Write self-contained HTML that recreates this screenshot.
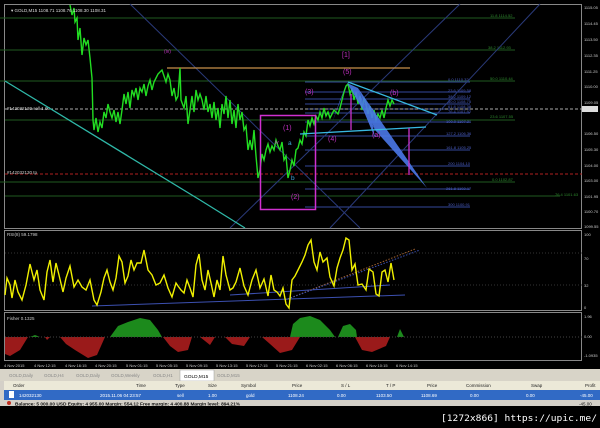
<!DOCTYPE html>
<html><head><meta charset="utf-8"><style>
body{margin:0;width:600px;height:428px;background:#000;overflow:hidden;font-family:"Liberation Sans",sans-serif;position:relative}
</style></head><body>
<svg width="600" height="428" style="position:absolute;left:0;top:0" font-family="Liberation Sans, sans-serif">
<rect x="0" y="0" width="600" height="406" fill="#000"/>
<rect x="4.5" y="4.5" width="577" height="224" fill="none" stroke="#888" stroke-width="1"/>
<rect x="4.5" y="230.5" width="577" height="80" fill="none" stroke="#888"/>
<rect x="4.5" y="312.5" width="577" height="48" fill="none" stroke="#888"/>
<g stroke="#1f5a1f" stroke-width="1">
<line x1="0" y1="18" x2="515" y2="18"/><line x1="0" y1="50" x2="515" y2="50"/>
<line x1="0" y1="81" x2="515" y2="81"/><line x1="5" y1="120" x2="515" y2="120"/>
<line x1="0" y1="182" x2="515" y2="182"/><line x1="5" y1="196" x2="560" y2="196"/>
</g>
<g stroke="#34489a" stroke-width="1">
<line x1="305" y1="92" x2="470" y2="92"/><line x1="305" y1="99" x2="470" y2="99"/>
<line x1="305" y1="104" x2="470" y2="104"/><line x1="305" y1="109" x2="470" y2="109"/>
<line x1="305" y1="113" x2="470" y2="113"/><line x1="305" y1="122" x2="470" y2="122"/>
<line x1="305" y1="136" x2="470" y2="136"/><line x1="305" y1="150" x2="470" y2="150"/>
<line x1="305" y1="166" x2="470" y2="166"/><line x1="305" y1="189" x2="470" y2="189"/>
<line x1="305" y1="207" x2="470" y2="207"/><line x1="305" y1="82" x2="470" y2="82"/>
</g>
<g font-size="4" fill="#4a5cc0">
<text x="448" y="81">0.0 1110.32</text><text x="448" y="92">23.6 1109.58</text>
<text x="448" y="98">38.2 1109.12</text><text x="448" y="103">50.0 1108.75</text>
<text x="448" y="108">61.8 1108.38</text><text x="448" y="113">76.4 1107.92</text>
<text x="446" y="123">100.0 1107.21</text><text x="446" y="135">127.2 1106.36</text>
<text x="446" y="149">161.8 1105.25</text><text x="448" y="165">200 1104.10</text>
<text x="446" y="190">261.8 1102.17</text><text x="448" y="206">300 1100.91</text>
</g>
<g font-size="4" fill="#2e8a2e">
<text x="490" y="17">11.8 1114.52</text><text x="488" y="49">38.2 1112.93</text>
<text x="490" y="80">50.0 1110.44</text><text x="490" y="118">23.6 1107.55</text>
<text x="492" y="181">0.0 1102.87</text><text x="555" y="196">76.4 1101.63</text>
</g>
<line x1="5" y1="109" x2="582" y2="109" stroke="#aaa" stroke-dasharray="3,2"/>
<line x1="5" y1="174" x2="582" y2="174" stroke="#b02020" stroke-dasharray="3,2"/>
<text x="7" y="110" font-size="4.5" fill="#ccc">#142032130 sell 1.00</text>
<text x="7" y="174" font-size="4.5" fill="#ccc">#142032130 tp</text>
<g stroke="#2a3a7a" stroke-width="1">
<line x1="230" y1="228" x2="460" y2="4"/><line x1="330" y1="228" x2="540" y2="4"/>
<line x1="130" y1="4" x2="360" y2="228"/>
</g>
<line x1="5" y1="81" x2="200" y2="200" stroke="#2fb8a8" stroke-width="1.3"/>
<line x1="200" y1="200" x2="245" y2="228" stroke="#2fb8a8" stroke-width="1.3"/>
<line x1="167" y1="68" x2="410" y2="68" stroke="#c8914a" stroke-width="1.3"/>
<polyline fill="none" stroke="#22dd22" stroke-width="1.4" points="70,5 72,15 74,8 75,22 77,18 78,40 80,28 82,55 84,38 86,45 88,40 90,58 92,78 93,120 94,130 96,118 98,132 100,122 102,128 104,112 106,118 108,104 110,112 112,118 114,110 116,122 118,112 120,124 122,110 124,94 126,104 128,92 130,108 132,90 134,96 136,88 138,100 140,88 142,92 144,84 146,96 148,86 150,80 152,90 154,82 156,78 158,74 160,72 162,70 164,76 166,82 168,74 170,80 172,96 174,88 176,100 178,96 180,68 181,100 184,108 186,96 188,124 190,110 192,96 194,112 196,90 198,100 200,94 202,100 204,110 206,96 208,112 210,104 212,118 214,102 216,120 218,108 220,128 222,104 224,114 226,96 228,118 230,100 232,124 234,110 236,128 238,104 240,120 242,112 244,130 246,126 248,150 250,140 252,150 254,130 256,156 258,178 260,170 262,154 264,160 266,150 268,144 270,152 272,146 274,150 276,140 278,146 280,150 282,142 284,160 286,156 288,178 290,170 292,160 294,166 296,150 298,148 300,140 302,144 304,132 306,136 308,120 310,126 312,118 314,124 316,116 318,120 320,112 322,118 324,108 326,116 328,112 330,118 332,114 334,110 336,112 338,114 340,108 342,100 344,92 346,86 348,84 350,94 352,88 354,100 356,92 358,104 360,96 362,110 364,98 366,104 368,114 370,106 372,118 374,110 376,120 378,114 380,118 382,110 384,118 386,108 388,100 390,106 392,100 394,104"/>
<g fill="#4a78e8" opacity="0.9">
<polygon points="332,123 347,83 340,100"/>
<polygon points="347,83 358,88 375,130"/>
<polygon points="358,88 375,130 427,188"/>
<polygon points="357,95 375,138 370,110"/>
</g>
<line x1="348" y1="82" x2="437" y2="115" stroke="#38b8e0" stroke-width="1.3"/>
<line x1="300" y1="134" x2="426" y2="127" stroke="#38b8e0" stroke-width="1.3"/>
<line x1="351" y1="94" x2="351" y2="130" stroke="#cc33cc" stroke-width="1.3"/>
<line x1="409" y1="128" x2="409" y2="175" stroke="#cc33cc" stroke-width="1.3"/>
<rect x="260.5" y="115.5" width="55" height="94" fill="none" stroke="#d030d0" stroke-width="1.5"/>
<g font-size="7" fill="#c030c0">
<text x="342" y="57">[1]</text><text x="343" y="74">(5)</text><text x="305" y="94">(3)</text>
<text x="390" y="95">(b)</text><text x="283" y="130">(1)</text><text x="328" y="141">(4)</text>
<text x="372" y="137">(a)</text><text x="291" y="199">(2)</text><text x="164" y="53" font-size="5">(iv)</text>
<text x="275" y="144" font-size="5">iv</text>
</g>
<text x="288" y="145" font-size="6.5" fill="#40a8e0">a</text>
<text x="291" y="180" font-size="6.5" fill="#40a8e0">b</text>
<text x="11" y="12" font-size="4.5" fill="#ddd">▾ GOLD,M15  1108.71 1108.76 1108.30 1108.31</text>
<g font-size="4" fill="#ccc">
<text x="584" y="9">1115.05</text><text x="584" y="25">1114.45</text><text x="584" y="41">1113.50</text>
<text x="584" y="57">1112.35</text><text x="584" y="73">1111.25</text><text x="584" y="88">1110.00</text>
<text x="584" y="104">1109.05</text><text x="584" y="135">1106.50</text><text x="584" y="151">1105.30</text>
<text x="584" y="167">1104.00</text><text x="584" y="182">1103.00</text><text x="584" y="198">1101.95</text>
<text x="584" y="213">1100.70</text><text x="584" y="228">1099.55</text>
<text x="584" y="236">100</text><text x="584" y="260">70</text><text x="584" y="287">32</text><text x="584" y="309">0</text>
<text x="584" y="318">1.96</text><text x="584" y="338">0.00</text><text x="584" y="357">-1.0935</text>
</g>
<rect x="582" y="106" width="16" height="6" fill="#ddd"/>
<text x="7" y="236" font-size="4.5" fill="#ccc">RSI(8) 59.1798</text>
<line x1="5" y1="285" x2="582" y2="285" stroke="#333" stroke-dasharray="1,2"/>
<line x1="5" y1="253" x2="582" y2="253" stroke="#333" stroke-dasharray="1,2"/>
<line x1="92" y1="306" x2="405" y2="295" stroke="#3c50b0"/>
<line x1="230" y1="295" x2="390" y2="285" stroke="#3c50b0"/>
<line x1="285" y1="300" x2="415" y2="249" stroke="#a06030" stroke-dasharray="1.5,1.5"/>
<line x1="285" y1="300" x2="420" y2="250" stroke="#3c50b0" stroke-dasharray="1.5,1.5"/>
<polyline fill="none" stroke="#f0f000" stroke-width="1.4" points="5,295 7,278 10,285 12,298 15,280 18,292 22,300 26,285 30,264 34,280 37,270 40,290 44,300 47,272 50,260 53,282 56,263 59,275 63,292 66,278 70,266 74,287 78,280 82,287 86,290 90,280 94,300 97,305 101,292 104,278 107,270 110,282 113,290 116,278 119,256 122,262 125,283 128,276 131,260 134,270 137,263 141,263 144,250 148,270 152,275 156,285 160,283 164,275 168,288 172,297 176,283 178,286 181,290 184,293 187,280 190,288 193,297 196,265 199,254 202,280 205,290 208,270 211,283 214,297 217,280 220,290 223,256 226,275 230,290 233,288 236,282 240,268 244,286 248,295 252,280 256,270 260,288 264,279 268,296 271,275 274,290 277,292 280,296 283,288 286,304 289,308 292,280 295,276 298,270 302,262 305,255 308,245 311,240 314,262 317,270 320,252 323,262 327,258 330,277 334,286 337,268 340,258 343,250 346,238 349,240 352,270 355,264 358,285 362,284 366,290 369,269 373,272 376,294 379,296 382,272 385,270 388,282 391,263 394,280"/>
<text x="7" y="320" font-size="4.5" fill="#ccc">Fisher 0.1325</text>
<g fill="#9a1a1a">
<polygon points="5,337 28,337 20,350 10,356 5,354"/>
<polygon points="45,337 50,337 47,340"/>
<polygon points="60,337 105,337 97,355 88,358 75,350 66,344"/>
<polygon points="163,337 192,337 188,350 178,352 170,346"/>
<polygon points="200,337 215,337 210,345"/>
<polygon points="225,337 250,337 244,346 232,344"/>
<polygon points="262,337 300,337 292,350 280,353 270,344"/>
<polygon points="355,337 390,337 386,346 372,352 362,350"/>
</g>
<g fill="#1c8a1c">
<polygon points="110,337 118,326 128,322 140,318 150,320 158,330 162,337"/>
<polygon points="290,337 293,324 300,318 310,316 320,320 330,330 335,337"/>
<polygon points="338,337 343,326 350,324 356,330 357,337"/>
<polygon points="397,337 400,329 404,337"/>
<polygon points="30,337 35,335 40,337"/>
</g>
<line x1="5" y1="337" x2="582" y2="337" stroke="#444" stroke-dasharray="1,2"/>
<g font-size="4" fill="#ccc">
<text x="4" y="367">4 Nov 2015</text><text x="34" y="367">4 Nov 12:15</text><text x="65" y="367">4 Nov 16:15</text>
<text x="95" y="367">4 Nov 20:15</text><text x="126" y="367">5 Nov 01:15</text><text x="156" y="367">5 Nov 05:15</text>
<text x="186" y="367">5 Nov 09:15</text><text x="216" y="367">5 Nov 13:15</text><text x="246" y="367">5 Nov 17:15</text>
<text x="276" y="367">5 Nov 21:15</text><text x="306" y="367">6 Nov 02:15</text><text x="336" y="367">6 Nov 06:15</text>
<text x="366" y="367">6 Nov 10:15</text><text x="396" y="367">6 Nov 14:15</text>
</g>
<rect x="0" y="369" width="600" height="12" fill="#d8d4c8"/>
<g font-size="4.5" fill="#888">
<text x="9" y="377">GOLD,Daily</text><text x="44" y="377">GOLD,H4</text><text x="76" y="377">GOLD,Daily</text>
<text x="111" y="377">GOLD,Weekly</text><text x="153" y="377">GOLD,H1</text><text x="217" y="377">GOLD,M15</text>
</g>
<rect x="180" y="370" width="34" height="11" fill="#fff" stroke="#999" stroke-width="0.5"/>
<text x="184" y="378" font-size="4.8" fill="#000">GOLD,M15</text>
<rect x="0" y="381" width="600" height="9" fill="#ece9d8"/>
<rect x="0" y="381" width="4" height="25" fill="#d4d0c8"/>
<g font-size="4.5" fill="#222">
<text x="13" y="387">Order</text><text x="136" y="387">Time</text><text x="175" y="387">Type</text>
<text x="208" y="387">Size</text><text x="241" y="387">Symbol</text><text x="292" y="387">Price</text>
<text x="341" y="387">S / L</text><text x="386" y="387">T / P</text><text x="427" y="387">Price</text>
<text x="466" y="387">Commission</text><text x="531" y="387">Swap</text><text x="585" y="387">Profit</text>
</g>
<rect x="4" y="390" width="596" height="10" fill="#316ac5"/>
<g font-size="4.5" fill="#fff">
<text x="19" y="397">142032130</text><text x="100" y="397">2015.11.06 04:23:57</text><text x="177" y="397">sell</text>
<text x="208" y="397">1.00</text><text x="246" y="397">gold</text><text x="288" y="397">1108.24</text>
<text x="337" y="397">0.00</text><text x="376" y="397">1103.50</text><text x="421" y="397">1108.69</text>
<text x="470" y="397">0.00</text><text x="526" y="397">0.00</text><text x="580" y="397">-45.00</text>
</g>
<rect x="9" y="391" width="5" height="7" fill="#fff"/>
<rect x="4" y="400" width="596" height="6" fill="#d4d0c8"/>
<text x="15" y="405.5" font-size="4.8" font-weight="bold" fill="#111">Balance: 5 000.00 USD  Equity: 4 955.00  Margin: 554.12  Free margin: 4 400.88  Margin level: 894.21%</text>
<text x="579" y="405.5" font-size="4.5" fill="#111">-45.00</text>
<circle cx="9" cy="403" r="2" fill="#c03020"/>
<text x="441" y="421" font-size="9.2" fill="#fff" font-family="DejaVu Sans Mono, monospace" textLength="156" lengthAdjust="spacingAndGlyphs">[1272x866] https://upic.me/</text>
</svg>
</body></html>
